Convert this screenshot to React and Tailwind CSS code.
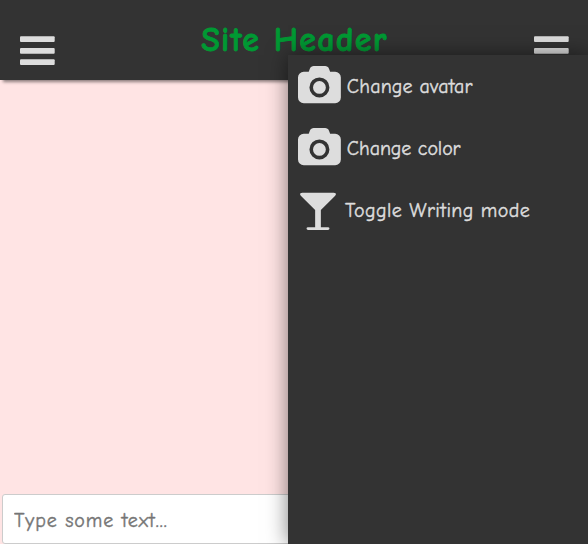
const FONT = "font-['Comic_Sans_MS','Comic_Neue','Open_Sans',sans-serif]";

function Bars() {
  return (
    <svg className="block h-[30px] w-[35px] fill-[#ddd]" viewBox="0 0 35 30">
      <rect x="0" y="0.3" width="34.7" height="5.7" rx="1" />
      <rect x="0" y="12" width="34.7" height="5.7" rx="1" />
      <rect x="0" y="23.2" width="34.7" height="5.7" rx="1" />
    </svg>
  );
}

function Camera() {
  return (
    <svg className="h-[37.14px] w-[42.86px] shrink-0 fill-[#ddd]" viewBox="0 0 1920 1664">
      <path d="M960 672q119 0 203.500 84.500t84.500 203.500-84.500 203.500-203.500 84.500-203.500-84.500-84.500-203.500 84.500-203.500 203.500-84.500zM1664 256q106 0 181 75t75 181v896q0 106-75 181t-181 75h-1408q-106 0-181-75t-75-181v-896q0-106 75-181t181-75h224l51-136q19-49 69.500-84.500t103.500-35.500h512q53 0 103.500 35.500t69.500 84.500l51 136h224zM960 1408q185 0 316.500-131.500t131.500-316.500-131.500-316.500-316.500-131.500-316.500 131.500-131.500 316.500 131.500 316.500 316.500 131.500z" />
    </svg>
  );
}

function Glass() {
  return (
    <svg className="mt-[1.5px] size-10 shrink-0 fill-[#ddd]" viewBox="0 0 1792 1792">
      <path d="M1699 186q0 35-43 78l-632 632v768h320q26 0 45 19t19 45-19 45-45 19h-896q-26 0-45-19t-19-45 19-45 45-19h320v-768l-632-632q-43-43-43-78 0-23 18-36.5t38-17.500 43-4h1408q23 0 43 4t38 17.500 18 36.500z" />
    </svg>
  );
}

export default function App() {
  return (
    <div className={`relative flex h-[544px] w-[588px] flex-col overflow-hidden bg-[#ffe4e4] ${FONT}`}>
      <header className="relative flex h-20 shrink-0 justify-between bg-[#333] pt-9 pr-[19px] pl-5 shadow-[3px_2px_3px_rgba(0,0,0,0.45)]">
        <Bars />
        <h1 className="-mt-5 text-[34px] leading-[48px] font-bold tracking-[1.3px] whitespace-nowrap text-[#093] [-webkit-text-stroke:0.8px_#009933]">Site Header</h1>
        <Bars />
      </header>
      <main className="flex-1" />
      <div className="px-0.5">
        <input
          className="block h-[50px] w-full rounded-[3px] border border-[#ccc] bg-white px-[11px] pt-[3px] text-[20px] tracking-[0.9px] text-[#757575] [-webkit-text-stroke:0.4px_#757575] placeholder:text-[#757575]"
          placeholder="Type some text..."
        />
      </div>
      <aside className="absolute top-[55px] right-0 bottom-0 w-[300px] bg-[#333] pl-2.5 text-[20px] text-[#ddd] shadow-[0_0_20px_rgba(0,0,0,0.5)] [-webkit-text-stroke:0.4px_#ddd]">
        <div className="flex h-[60px] items-center gap-[6px]">
          <Camera />
          <span className="mt-[3px] tracking-[0.15px] whitespace-nowrap">Change avatar</span>
        </div>
        <div className="mt-0.5 flex h-[60px] items-center gap-[6px]">
          <Camera />
          <span className="mt-[3px] tracking-[-0.1px] whitespace-nowrap">Change color</span>
        </div>
        <div className="mt-0.5 flex h-[60px] items-center gap-[7px]">
          <Glass />
          <span className="mt-[3px] tracking-[0.4px] whitespace-nowrap">Toggle Writing mode</span>
        </div>
      </aside>
    </div>
  );
}
